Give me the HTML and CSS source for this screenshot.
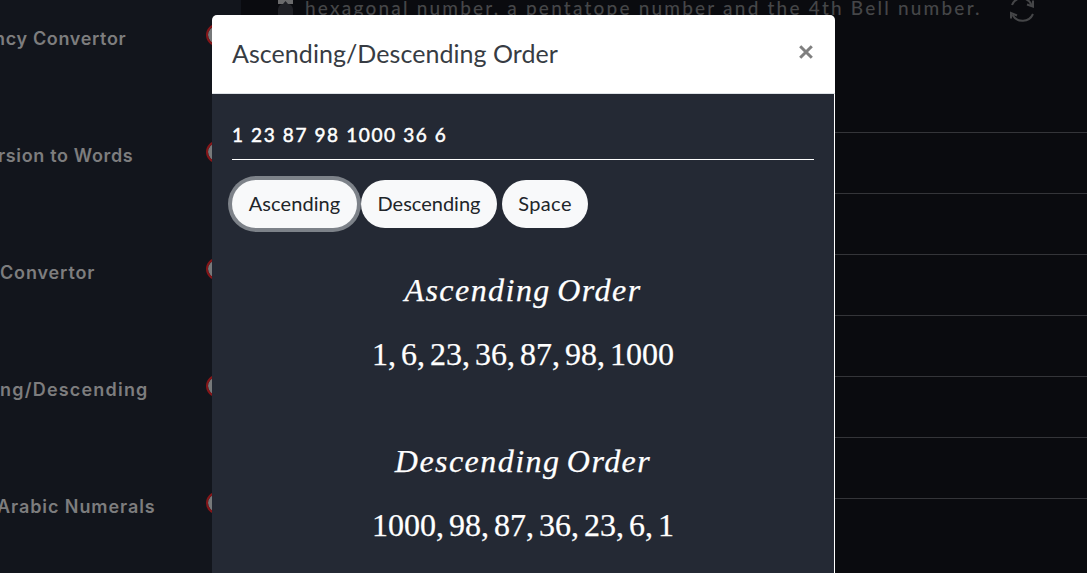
FILE: index.html
```html
<!DOCTYPE html>
<html lang="en">
<head>
<meta charset="utf-8">
<title>Ascending/Descending Order</title>
<link rel="stylesheet" href="styles.css">
</head>
<body>
<div class="page">
  <aside class="sidebar">
    <div class="tool"><span class="tool-name n1">ncy Convertor</span><i class="heart"></i></div>
    <div class="tool"><span class="tool-name n2">rsion to Words</span><i class="heart"></i></div>
    <div class="tool"><span class="tool-name n3">Convertor</span><i class="heart"></i></div>
    <div class="tool"><span class="tool-name n4">ng/Descending</span><i class="heart"></i></div>
    <div class="tool"><span class="tool-name n5">Arabic Numerals</span><i class="heart"></i></div>
  </aside>
  <main class="content">
    <div class="fact">
      <svg class="fact-icon" width="15" height="16" viewBox="0 0 15 16"><path fill="#6b6b6c" d="M0 0h15v4H0z"/><path fill="#202126" d="M0 16V9Q1 4 5 4L7.500 1 10 4q4 0 5 5v7z"/></svg>
      <span class="fact-text">hexagonal number, a pentatope number and the 4th Bell number.</span>
      <svg class="refresh" width="28" height="28" viewBox="0 0 28 28" fill="none" stroke="#454648" stroke-width="2">
        <path d="M4 10A10.500 10.500 0 0 1 23.500 10M25 19A11.500 11.500 0 0 1 4.500 20"/>
        <path d="M19 9.500l6 2V5.500M3 23.500V18l6 2.500"/>
      </svg>
    </div>
    <div class="lines"><hr><hr><hr><hr><hr><hr><hr></div>
  </main>
</div>
<section class="modal">
  <header class="modal-head">
    <h5 class="modal-title">Ascending/Descending Order</h5>
    <svg class="close" width="16" height="16" viewBox="0 0 16 16" stroke="#7f7f7f" stroke-width="3"><path d="M2.200 2.200L13.800 13.800M13.800 2.200L2.200 13.800"/></svg>
  </header>
  <div class="modal-body">
    <div class="field"><span class="field-text">1 23 87 98 1000 36 6</span></div>
    <div class="buttons">
      <button class="btn asc">Ascending</button>
      <button class="btn desc">Descending</button>
      <button class="btn space">Space</button>
    </div>
    <div class="math">
      <p class="formula name"><span>Ascending Order</span></p>
      <p class="formula"><span class="nums">1<b>,</b>6<b>,</b>23<b>,</b>36<b>,</b>87<b>,</b>98<b>,</b>1000</span></p>
      <p class="formula name second"><span>Descending Order</span></p>
      <p class="formula last"><span class="nums">1000<b>,</b>98<b>,</b>87<b>,</b>36<b>,</b>23<b>,</b>6<b>,</b>1</span></p>
    </div>
  </div>
</section>
</body>
</html>
```
FILE: styles.css
```css
* { box-sizing: border-box; }
body { margin: 0; width: 1087px; height: 573px; overflow: hidden; background: #0a0b0f; font-family: Lato, "Open Sans", sans-serif; }
.page { display: flex; height: 573px; }
.sidebar { width: 241px; flex: none; background: #12151c; padding-top: 22px; overflow: hidden; }
.tool { height: 117px; display: flex; justify-content: space-between; align-items: flex-start; }
.tool-name { margin-top: 1px; font: 600 18px/32px Inter, sans-serif; color: #7d7d7e; white-space: pre; }
.n1 { letter-spacing: .65px; margin-left: -6px; }
.n2 { letter-spacing: .65px; margin-left: -2px; }
.n3 { letter-spacing: .85px; }
.n4 { letter-spacing: 1.2px; }
.n5 { letter-spacing: .92px; margin-left: -3px; }
.heart { width: 21px; height: 22px; margin: 2px 14px 0 0; border: 2px solid #861619; border-radius: 50%; background: #77797a; background-clip: padding-box; }
.content { flex: 1; min-width: 0; }
.fact { height: 24px; display: flex; padding-left: 37px; }
.fact-icon { flex: none; }
.fact-text { width: 692px; margin: -6px 0 0 12px; font: 500 19px/28px Lato, sans-serif; letter-spacing: 2.200px; color: #454648; white-space: nowrap; }
.refresh { margin: -5px 0 0 11px; flex: none; }
.lines { padding-top: 108px; }
.lines hr { margin: 0 0 60px; border: 0; height: 1px; background: #343539; }
.modal { position: absolute; left: 212px; top: 15px; width: 623px; height: 558px; background: #fff; border-radius: 5px 5px 0 0; }
.modal-head { height: 79px; display: flex; justify-content: space-between; padding: 19px 21px 0 20px; border-bottom: 1px solid #dee2e6; }
.modal-title { margin: 0; font: 400 25px/38px Lato, sans-serif; letter-spacing: .05px; color: #373c43; white-space: nowrap; }
.close { margin-top: 10px; }
.modal-body { width: 622px; height: 479px; padding: 24px 20px 0; background: #242934; color: #fff; }
.field { height: 42px; border-bottom: 1px solid #fff; }
.field-text { font: 400 19px/34px Lato, sans-serif; letter-spacing: 1.600px; white-space: nowrap; -webkit-text-stroke: .5px #fff; }
.buttons { display: flex; gap: 4px; margin-top: 20px; }
.btn { height: 48px; padding: 0 0 3px; border: 0; border-radius: 24px; background: #f8f9fa; color: #212529; font: 400 20px/46px Lato, sans-serif; }
.asc { width: 125px; box-shadow: 0 0 0 4px #7d8289; letter-spacing: .1px; }
.desc { width: 136px; }
.space { width: 86px; margin-left: 1px; letter-spacing: .4px; }
.math { display: flex; flex-direction: column; padding-top: 40px; }
.formula { margin: 0 0 24px; height: 40px; display: flex; justify-content: center; font: 400 32px/44px "Liberation Serif", serif; white-space: nowrap; -webkit-text-stroke: .25px #fff; }
.name { font-style: italic; letter-spacing: 1.450px; word-spacing: -3px; }
.second { margin-top: 43px; }
.last { margin-bottom: 0; }
.formula b { font-weight: 400; margin-right: 5px; }
```
